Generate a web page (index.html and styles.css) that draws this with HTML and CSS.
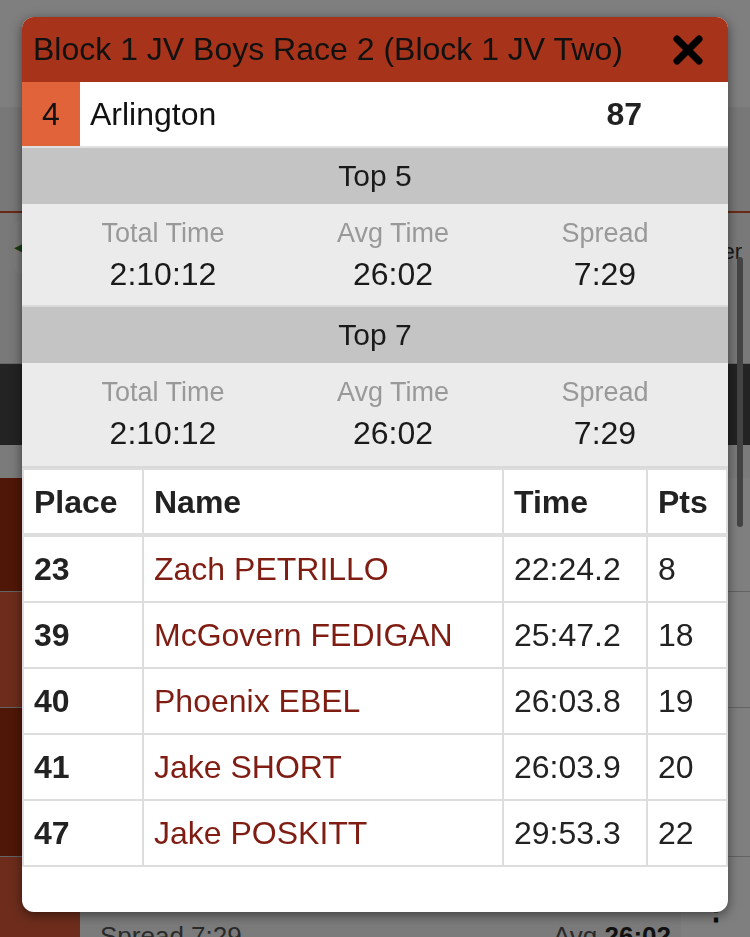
FILE: index.html
```html
<!DOCTYPE html>
<html>
<head>
    <meta charset="UTF-8">
    <title>Team Results</title>
    <link rel="stylesheet" href="styles.css">
</head>
<body>
    <div class="page">
        <div class="topbar"></div>
        <div class="subbar"></div>
        <div class="toolbar">
            <div class="back-btn">&#9664;</div>
            <div class="filter">Filter</div>
        </div>
        <div class="darkbar"></div>
        <div class="gap"></div>
        <div class="list">
            <div class="list-row row-a">
                <div class="seed-cell dark"></div>
                <div class="row-body"></div>
                <div class="row-side"></div>
            </div>
            <div class="list-row row-b">
                <div class="seed-cell light"></div>
                <div class="row-body"></div>
                <div class="row-side"></div>
            </div>
            <div class="list-row row-c">
                <div class="seed-cell dark"></div>
                <div class="row-body"></div>
                <div class="row-side"></div>
            </div>
            <div class="list-row row-d">
                <div class="seed-cell light"></div>
                <div class="row-body">
                    <div class="row-line">
                        <span class="muted">Spread 7:29</span>
                        <span class="muted">Avg <b>26:02</b></span>
                    </div>
                </div>
                <div class="row-side"><span class="dots">&#8942;</span></div>
            </div>
        </div>
        <div class="scroll-thumb"></div>
    </div>

    <div class="overlay"></div>

    <div class="modal">
        <div class="modal-header">
            <div class="modal-title">Block 1 JV Boys Race 2 (Block 1 JV Two)</div>
            <svg class="close" viewBox="0 0 34 34" width="34" height="34">
                <path d="M6 6 L28 28 M28 6 L6 28" stroke="#000" stroke-width="7" stroke-linecap="round" fill="none"/>
            </svg>
        </div>

        <div class="team-row">
            <div class="seed">4</div>
            <div class="team-name">Arlington</div>
            <div class="team-score">87</div>
        </div>

        <div class="top-head">Top 5</div>
        <div class="stats">
            <div>
                <div class="stat-label">Total Time</div>
                <div class="stat-value">2:10:12</div>
            </div>
            <div>
                <div class="stat-label">Avg Time</div>
                <div class="stat-value">26:02</div>
            </div>
            <div>
                <div class="stat-label">Spread</div>
                <div class="stat-value">7:29</div>
            </div>
        </div>

        <div class="top-head">Top 7</div>
        <div class="stats last">
            <div>
                <div class="stat-label">Total Time</div>
                <div class="stat-value">2:10:12</div>
            </div>
            <div>
                <div class="stat-label">Avg Time</div>
                <div class="stat-value">26:02</div>
            </div>
            <div>
                <div class="stat-label">Spread</div>
                <div class="stat-value">7:29</div>
            </div>
        </div>

        <table class="results">
            <colgroup>
                <col style="width:120px">
                <col style="width:360px">
                <col style="width:144px">
                <col style="width:80px">
            </colgroup>
            <thead>
                <tr><th>Place</th><th>Name</th><th>Time</th><th>Pts</th></tr>
            </thead>
            <tbody>
                <tr><td class="place">23</td><td class="name">Zach PETRILLO</td><td>22:24.2</td><td>8</td></tr>
                <tr><td class="place">39</td><td class="name">McGovern FEDIGAN</td><td>25:47.2</td><td>18</td></tr>
                <tr><td class="place">40</td><td class="name">Phoenix EBEL</td><td>26:03.8</td><td>19</td></tr>
                <tr><td class="place">41</td><td class="name">Jake SHORT</td><td>26:03.9</td><td>20</td></tr>
                <tr><td class="place">47</td><td class="name">Jake POSKITT</td><td>29:53.3</td><td>22</td></tr>
            </tbody>
        </table>
    </div>
</body>
</html>
```

FILE: styles.css
```css
body {
    margin: 0;
    height: 937px;
    overflow: hidden;
    font-family: "Liberation Sans", Arial, sans-serif;
    color: #222;
    background-color: #f4f4f4;
}

/* page behind the dialog */
.page {
    position: relative;
    height: 937px;
}
.topbar {
    height: 107px;
    background-color: #ffffff;
}
.subbar {
    height: 104px;
    background-color: #f1f1f1;
    border-bottom: 2px solid #d9542c;
}
.toolbar {
    height: 151px;
    box-sizing: border-box;
    padding: 8px 8px 0 14px;
    display: flex;
    justify-content: space-between;
    background-color: #f3f3f3;
    border-bottom: 1px solid #d0d0d0;
}
.back-btn {
    width: 46px;
    height: 52px;
    line-height: 52px;
    font-size: 14px;
    color: #2e7d32;
    background-color: #fafafa;
    border-radius: 6px;
}
.filter {
    margin-top: 18px;
    font-size: 22px;
    color: #333;
}
.darkbar {
    height: 81px;
    background-color: #474747;
}
.gap {
    height: 33px;
    background-color: #f6f6f6;
}
.list-row {
    display: flex;
    border-bottom: 1px solid #c8c8c8;
}
.row-a { height: 113px; }
.row-b { height: 115px; }
.row-c { height: 148px; }
.row-d { height: 90px; }
.seed-cell {
    width: 80px;
}
.seed-cell.dark {
    background-color: #9e2e0f;
}
.seed-cell.light {
    background-color: #dc5a38;
}
.row-body {
    flex: 1;
    background-color: #f6f6f6;
}
.row-side {
    width: 69px;
    background-color: #ffffff;
    position: relative;
}
.row-line {
    display: flex;
    justify-content: space-between;
    padding: 64px 10px 0 20px;
    font-size: 26px;
}
.muted {
    color: #555;
}
.muted b {
    color: #222;
}
.dots {
    position: absolute;
    left: 20px;
    top: 34px;
    font-size: 30px;
    font-weight: bold;
    color: #111;
}
.scroll-thumb {
    position: absolute;
    right: 7px;
    top: 257px;
    width: 6px;
    height: 270px;
    border-radius: 3px;
    background-color: #888;
}

.overlay {
    position: fixed;
    top: 0;
    left: 0;
    right: 0;
    bottom: 0;
    background-color: rgba(0, 0, 0, 0.5);
}

/* dialog */
.modal {
    position: absolute;
    top: 17px;
    left: 22px;
    width: 706px;
    height: 895px;
    overflow: hidden;
    background-color: #ffffff;
    border-radius: 12px;
    box-shadow: 0 3px 12px rgba(0, 0, 0, 0.5);
}
.modal-header {
    height: 65px;
    box-sizing: border-box;
    padding: 0 23px 0 11px;
    display: flex;
    align-items: center;
    justify-content: space-between;
    background-color: #a8331b;
}
.modal-title {
    font-size: 32px;
    color: #111;
    white-space: nowrap;
}
.close {
    display: block;
}
.team-row {
    height: 64px;
    display: flex;
    align-items: center;
    font-size: 32px;
    border-bottom: 2px solid #e0e0e0;
}
.seed {
    width: 58px;
    align-self: stretch;
    display: flex;
    align-items: center;
    justify-content: center;
    background-color: #e1633a;
    color: #111;
}
.team-name {
    flex: 1;
    padding-left: 10px;
    color: #111;
}
.team-score {
    font-weight: bold;
    margin-right: 86px;
}
.top-head {
    height: 56px;
    line-height: 56px;
    text-align: center;
    font-size: 30px;
    background-color: #c4c4c4;
    color: #1a1a1a;
}
.stats {
    display: grid;
    grid-template-columns: 282fr 178fr 246fr;
    padding: 11px 0 8px;
    text-align: center;
    background-color: #ebebeb;
    border-bottom: 2px solid #d9d9d9;
}
.stats.last {
    padding-bottom: 10px;
}
.stat-label {
    font-size: 27px;
    line-height: 36px;
    color: #999;
}
.stat-value {
    font-size: 32px;
    line-height: 46px;
    color: #1a1a1a;
}
.results {
    width: 704px;
    table-layout: fixed;
    border-collapse: collapse;
    font-size: 32px;
}
.results th,
.results td {
    height: 64px;
    padding: 0 10px;
    border: 2px solid #dddddd;
    text-align: left;
    line-height: 1;
    white-space: nowrap;
}
.results th {
    height: 63px;
    border-bottom-width: 4px;
}
.results td {
    color: #222;
}
.results td.place {
    font-weight: bold;
}
.results td.name {
    color: #7f1d13;
}
```
